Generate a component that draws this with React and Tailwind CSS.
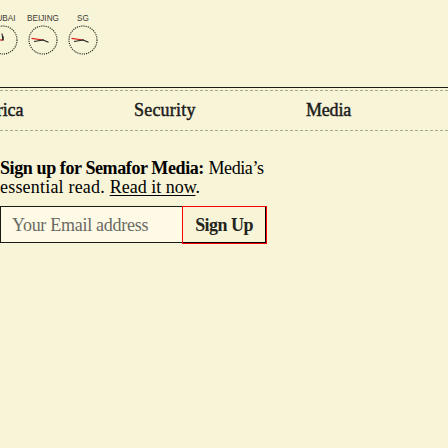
const clocks = [
  { name: 'DUBAI', hour: [0, -4], minute: [-1, -6.5], second: [-11, 0] },
  { name: 'BEIJING', hour: [5.5, 2.2], minute: [-9, 1.5], second: [-11.5, -1.6] },
  { name: 'SG', hour: [5.5, 2.2], minute: [-9, 1.5], second: [-11.5, -1.6] },
];

function Clock({ name, hour, minute, second }) {
  return (
    <div className="flex w-10 shrink-0 flex-col items-center">
      <span className="h-[11px] font-['Liberation_Sans',Arial,sans-serif] text-[8.2px] leading-[11px] text-[#3c3b35]">{name}</span>
      <svg className="mt-px block" width="30" height="30" viewBox="-15 -15 30 30">
        <circle r="14" fill="none" stroke="#22211c" strokeWidth="1.1" strokeDasharray="1.2 1" />
        <path d={`M0 0L${second[0]} ${second[1]}`} stroke="#d8221b" strokeWidth="1.2" />
        <path d={`M0 0L${hour[0]} ${hour[1]}`} stroke="#22211c" strokeWidth="1.2" />
        <path d={`M0 0L${minute[0]} ${minute[1]}`} stroke="#22211c" strokeWidth="1.1" />
        <circle r="0.8" fill="#33322c" />
      </svg>
    </div>
  );
}

export default function App() {
  return (
    <div className="h-[448px] w-[448px] overflow-hidden bg-[#f8f4d7] font-['Liberation_Serif','Times_New_Roman',serif] text-[18px] text-black">
      <header className="flex h-[87px] items-start pt-[13px]">
        <div className="-ml-[17px] flex">
          {clocks.map((clock) => <Clock key={clock.name} {...clock} />)}
        </div>
      </header>
      <div className="h-[3px] border-t border-[#1b1b16]" />
      <nav className="flex h-[41px] items-center border-y border-dashed border-[#aaa78f] text-[#1b1b1b] [-webkit-text-stroke:0.45px_#1b1b1b]">
        <a className="-ml-[22px] w-[156px] tracking-[-0.1px]">Africa</a>
        <a className="w-[172px] tracking-[0.2px]">Security</a>
        <a className="tracking-[-0.2px]">Media</a>
      </nav>
      <main className="pt-[28px]">
        <p className="whitespace-nowrap leading-[19px]">
          <strong className="tracking-[-0.4px]">Sign up for Semafor Media:</strong> <span className="tracking-[-0.4px]">Media’s</span>
          <br />
          <span className="tracking-[0.2px]">essential read. </span>
          <a className="underline decoration-1 underline-offset-2">Read it now</a>.
        </p>
        <form className="mt-[9px] flex">
          <input className="h-[37px] w-[182px] border border-r-0 border-[#1b1b16] bg-[#fefae6] pt-[2px] pl-[11px] tracking-[-0.28px] outline-none placeholder:text-[#6b6a65]" placeholder="Your Email address" />
          <button type="button" className="h-[38px] w-[85px] border border-[#ff0000] font-bold tracking-[-0.55px] text-[#242420]">
            <span className="flex h-full items-center justify-center border-r border-b border-black pt-[2px]">Sign Up</span>
          </button>
        </form>
      </main>
    </div>
  );
}
